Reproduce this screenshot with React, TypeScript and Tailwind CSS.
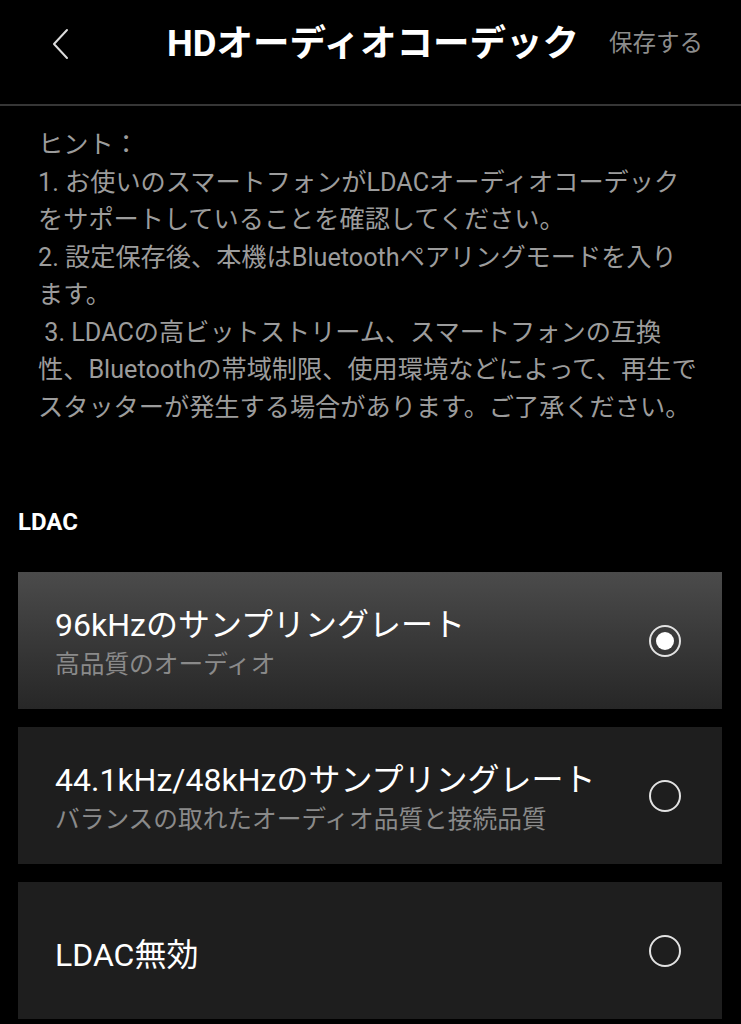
import { ReactNode } from "react";

const FONT = "font-[Roboto,'Noto_Sans_CJK_JP',sans-serif]";

const HINT_LINES = [
  "ヒント：",
  "1. お使いのスマートフォンがLDACオーディオコーデック",
  "をサポートしていることを確認してください。",
  "2. 設定保存後、本機はBluetoothペアリングモードを入り",
  "ます。",
  "\u00a03. LDACの高ビットストリーム、スマートフォンの互換",
  "性、Bluetoothの帯域制限、使用環境などによって、再生で",
  "スタッターが発生する場合があります。ご了承ください。",
];

type Option = { id: string; title: string; sub?: string };

const OPTIONS: Option[] = [
  { id: "96", title: "96kHzのサンプリングレート", sub: "高品質のオーディオ" },
  { id: "48", title: "44.1kHz/48kHzのサンプリングレート", sub: "バランスの取れたオーディオ品質と接続品質" },
  { id: "off", title: "LDAC無効" },
];

function Radio({ checked }: { checked: boolean }) {
  return (
    <span className="flex h-8 w-8 items-center justify-center rounded-full border-2 border-[#e2e2e2]">
      {checked && <span className="h-[18px] w-[18px] rounded-full bg-white" />}
    </span>
  );
}

function Card({ selected, children }: { selected: boolean; children: ReactNode }) {
  return (
    <div
      className={
        selected
          ? "flex h-[137px] items-center justify-between bg-gradient-to-b from-[#4b4b4b] to-[#272727] pl-[37px] pr-[41px]"
          : "flex h-[137px] items-center justify-between bg-[#1e1e1e] pl-[37px] pr-[41px]"
      }
    >
      {children}
    </div>
  );
}

export default function App() {
  const selected = "96";
  return (
    <div className={`min-h-[1024px] w-[741px] bg-black ${FONT}`}>
      <header className="h-[106px] border-b-2 border-[#363636]">
        <div className="flex h-[88px] items-center">
          <button className="ml-[48px] flex h-10 w-6 items-center justify-center" aria-label="戻る">
            <svg width="18" height="32" viewBox="0 0 18 32" fill="none">
              <path d="M16 2 L3 16 L16 30" stroke="#dcdcdc" strokeWidth="2" strokeLinecap="round" strokeLinejoin="round" />
            </svg>
          </button>
          <h1 className="ml-[95px] text-[36.5px] font-bold text-white">HDオーディオコーデック</h1>
          <span className="ml-auto mr-[38px] text-[23.5px] text-[#8c8c8c]">保存する</span>
        </div>
      </header>

      <div className="px-[38px] pt-[20px] text-[25.2px] leading-[37.5px] text-[#9c9c9c]">
        {HINT_LINES.map((l, i) => (
          <div key={i} className="whitespace-nowrap">{l}</div>
        ))}
      </div>

      <div className="mt-[81px] px-[18px] text-[24px] font-bold leading-[30px] text-white">LDAC</div>

      <div className="mt-[35px] flex flex-col gap-[18px] pl-[18px] pr-[19px]">
        {OPTIONS.map((o) => (
          <Card key={o.id} selected={o.id === selected}>
            <div className="flex flex-col pt-[8px]">
              <span className="text-[32px] leading-[40px] text-white">{o.title}</span>
              {o.sub && <span className="text-[24.7px] leading-[40px] text-[#8a8a8a]">{o.sub}</span>}
            </div>
            <Radio checked={o.id === selected} />
          </Card>
        ))}
      </div>
    </div>
  );
}
